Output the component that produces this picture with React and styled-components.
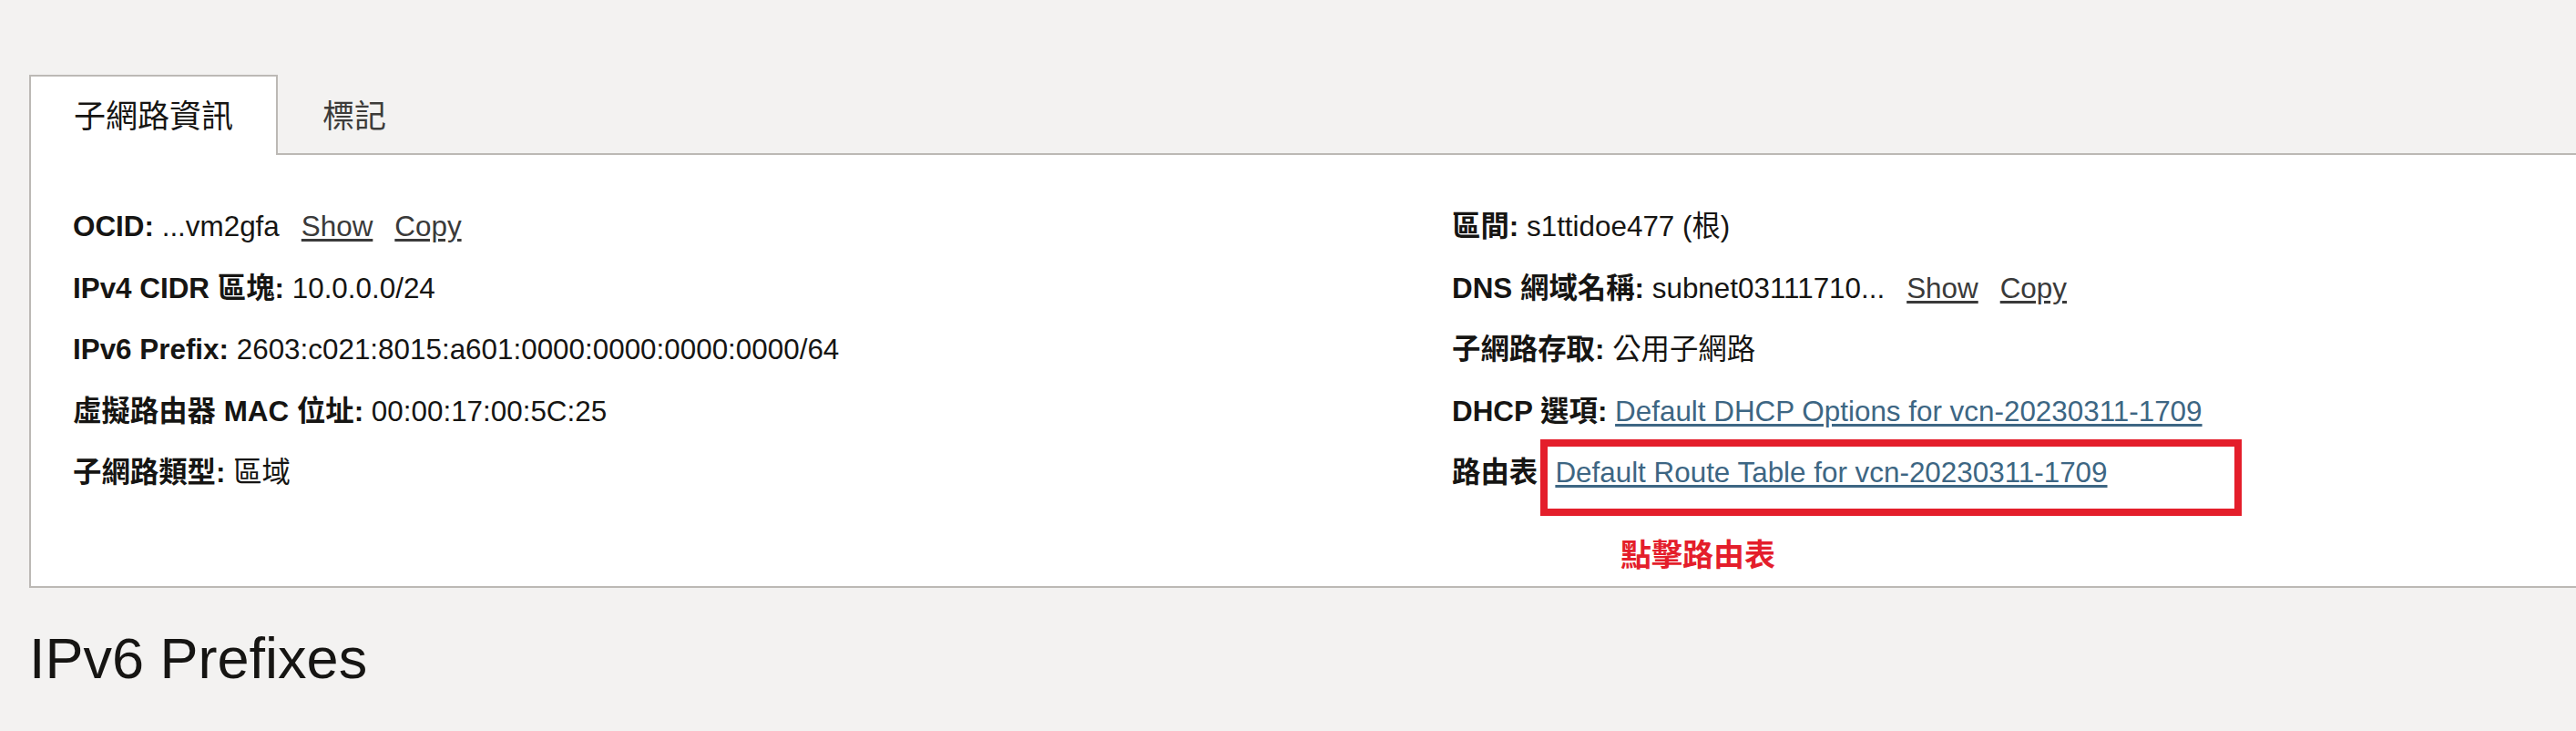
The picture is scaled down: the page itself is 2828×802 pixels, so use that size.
import React from "react";
import styled, { createGlobalStyle } from "styled-components";

const GlobalStyle = createGlobalStyle`
  html, body {
    margin: 0;
    padding: 0;
    background: #f3f2f1;
    overflow: hidden;
  }
  body {
    font-family: "Liberation Sans", "Noto Sans CJK TC", Arial, sans-serif;
    color: #161513;
  }
`;

const leftRows = [
  { label: "OCID:", value: "...vm2gfa", actions: ["Show", "Copy"] },
  { label: "IPv4 CIDR 區塊:", value: "10.0.0.0/24" },
  { label: "IPv6 Prefix:", value: "2603:c021:8015:a601:0000:0000:0000:0000/64" },
  { label: "虛擬路由器 MAC 位址:", value: "00:00:17:00:5C:25" },
  { label: "子網路類型:", value: "區域" },
];

const rightRows = [
  { label: "區間:", value: "s1ttidoe477 (根)" },
  { label: "DNS 網域名稱:", value: "subnet03111710...", actions: ["Show", "Copy"] },
  { label: "子網路存取:", value: "公用子網路" },
  { label: "DHCP 選項:", link: "Default DHCP Options for vcn-20230311-1709" },
  { label: "路由表:", link: "Default Route Table for vcn-20230311-1709" },
];

function App() {
  const renderRow = (row) => (
    <Row key={row.label}>
      <Label>{row.label}</Label>{" "}
      {row.value && <span>{row.value}</span>}
      {row.link && <ResourceLink href="#">{row.link}</ResourceLink>}
      {row.actions &&
        row.actions.map((a) => (
          <ActionLink key={a} href="#">
            {a}
          </ActionLink>
        ))}
    </Row>
  );

  return (
    <Page>
      <GlobalStyle />
      <TabBar>
        <Tab active>子網路資訊</Tab>
        <Tab>標記</Tab>
      </TabBar>
      <Panel>
        <InfoGrid>
          <Column>{leftRows.map(renderRow)}</Column>
          <Column>{rightRows.map(renderRow)}</Column>
        </InfoGrid>
        <Highlight />
        <Callout>點擊路由表</Callout>
      </Panel>
      <SectionTitle>IPv6 Prefixes</SectionTitle>
    </Page>
  );
}

const Page = styled.div`
  padding: 82px 0 0 32px;
  min-height: 720px;
`;

const TabBar = styled.div`
  display: flex;
  height: 86px;
  border-bottom: 2px solid #bcb9b5;
`;

const Tab = styled.div`
  display: flex;
  align-items: center;
  box-sizing: border-box;
  height: 88px;
  margin-bottom: -2px;
  padding: 0 47px 6px 47px;
  font-size: 35px;
  font-family: "Liberation Sans", "Noto Sans CJK TC", sans-serif;
  color: ${(p) => (p.active ? "#161513" : "#3d3c3a")};
  background: ${(p) => (p.active ? "#ffffff" : "transparent")};
  border: 2px solid ${(p) => (p.active ? "#bcb9b5" : "transparent")};
  border-bottom: none;
`;

const Panel = styled.div`
  position: relative;
  background: #ffffff;
  border-left: 2px solid #bcb9b5;
  border-bottom: 2px solid #bcb9b5;
  padding: 56px 0 102px 46px;
`;

const InfoGrid = styled.div`
  display: grid;
  grid-template-columns: 1514px 1fr;
`;

const Column = styled.div`
  display: flex;
  flex-direction: column;
  gap: 22.5px;
`;

const Row = styled.div`
  font-size: 31.4px;
  line-height: 45px;
  white-space: nowrap;
  color: #161513;
`;

const Label = styled.span`
  font-weight: bold;
`;

const ActionLink = styled.a`
  margin-left: 24px;
  color: #3a3a3a;
  text-decoration: underline;
  text-underline-offset: 3px;
`;

const ResourceLink = styled.a`
  color: #3d6683;
  text-decoration: underline;
  text-underline-offset: 3px;
`;

const Highlight = styled.div`
  position: absolute;
  left: 1657px;
  top: 312px;
  width: 770px;
  height: 84px;
  box-sizing: border-box;
  border: 8px solid #e41e2b;
  pointer-events: none;
`;

const Callout = styled.div`
  position: absolute;
  left: 1745px;
  top: 420px;
  font-size: 34px;
  line-height: 1;
  font-weight: bold;
  color: #e41e2b;
  font-family: "Noto Sans CJK TC", sans-serif;
`;

const SectionTitle = styled.h2`
  margin: 41px 0 0 0;
  font-size: 63px;
  line-height: 72px;
  font-weight: normal;
  color: #161513;
`;

export default App;
